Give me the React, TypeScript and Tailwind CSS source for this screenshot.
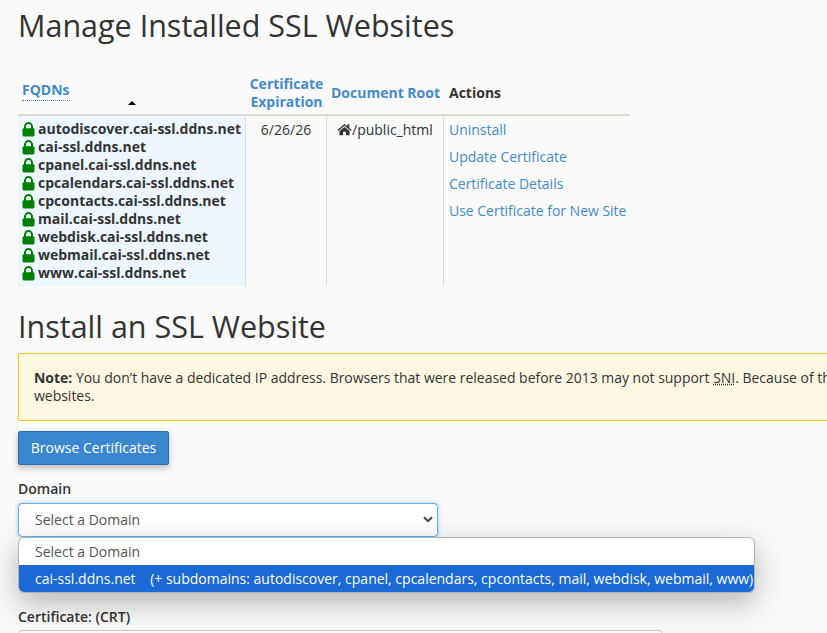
const fqdns = [
  'autodiscover.cai-ssl.ddns.net',
  'cai-ssl.ddns.net',
  'cpanel.cai-ssl.ddns.net',
  'cpcalendars.cai-ssl.ddns.net',
  'cpcontacts.cai-ssl.ddns.net',
  'mail.cai-ssl.ddns.net',
  'webdisk.cai-ssl.ddns.net',
  'webmail.cai-ssl.ddns.net',
  'www.cai-ssl.ddns.net',
]

const actions = ['Uninstall', 'Update Certificate', 'Certificate Details', 'Use Certificate for New Site']

function Lock() {
  return (
    <svg width="13" height="15" viewBox="0 0 13 15" className="shrink-0">
      <path d="M3 7V4.6a3.5 3.5 0 0 1 7 0V7" fill="none" stroke="#008000" strokeWidth="2" />
      <rect x="0.5" y="6.2" width="12" height="8.3" rx="1.4" fill="#008000" />
    </svg>
  )
}

function House() {
  return (
    <svg width="15" height="13" viewBox="0 0 16 13" className="inline-block align-[-1px]">
      <path d="M8 0.6 0.3 7l1 1.1L8 2.6l6.7 5.5 1-1.1-2.6-2.2V1h-2v2.3z" fill="#333333" />
      <path d="M8 3.7 2.6 8.2v4.4h3.8V9h3.2v3.6h3.8V8.2z" fill="#333333" />
    </svg>
  )
}

export default function App() {
  return (
    <div className="relative h-[633px] w-[827px] overflow-hidden bg-[#fafafa] pl-[18px] font-['Open_Sans',sans-serif] text-[14px] text-[#333333]">
      <h1 className="mt-[5px] text-[30.5px] leading-[40px] font-normal">Manage Installed SSL Websites</h1>

      {/* installed sites table */}
      <div className="mt-[30px] w-[612px]">
        <div className="flex h-[41px] border-b-2 border-[#dddcd1] font-bold">
          <div className="relative w-[228px] pl-[4px] pt-[4px]">
            <span className="border-b border-dotted border-[#428bca] pb-[1px] leading-[16px] text-[#428bca]">FQDNs</span>
            <span className="absolute left-[110px] top-[26px] h-0 w-0 border-x-[4px] border-b-[4px] border-x-transparent border-b-black" />
          </div>
          <div className="w-[81px] text-center leading-[18px] text-[#428bca]">
            Certificate
            <br />
            Expiration
          </div>
          <div className="w-[117px] pt-[9px] text-center leading-[18px] text-[#428bca]">Document Root</div>
          <div className="pl-[5px] pt-[9px] leading-[18px]">Actions</div>
        </div>
        <div className="flex h-[170px]">
          <div className="w-[228px] border-r border-[#dddcd1] bg-[#eef7ff] pl-[4px] pt-[4px] font-bold">
            {fqdns.map((name) => (
              <div key={name} className="flex h-[18px] items-center gap-[3px] leading-[18px]">
                <Lock />
                <span>{name}</span>
              </div>
            ))}
          </div>
          <div className="w-[81px] border-r border-[#dddcd1] pt-[5px] text-center leading-[18px]">6/26/26</div>
          <div className="w-[117px] border-r border-[#dddcd1] pt-[5px] pl-[10px] leading-[18px]">
            <House />
            /public_html
          </div>
          <div className="flex-1 pl-[5px] pt-[5px] tracking-[-0.02px]">
            {actions.map((action) => (
              <div key={action} className="h-[27px] leading-[18px] text-[#428bca]">
                {action}
              </div>
            ))}
          </div>
        </div>
      </div>

      <h2 className="mt-[20px] text-[30.5px] leading-[40px] font-normal">Install an SSL Website</h2>

      <div className="mt-[7px] h-[68px] w-[1000px] rounded-[2px] border border-[#f0c419] bg-[#fef8e3] pl-[15px] pt-[15px] leading-[18px] tracking-[-0.02px] whitespace-nowrap">
        <strong className="font-bold">Note:</strong> You don’t have a dedicated IP address. Browsers that were released before 2013 may not support{' '}
        <span className="underline decoration-dotted">SNI</span>. Because of this, you may encounter errors on your
        <br />
        websites.
      </div>

      <button className="mt-[10px] flex h-[34px] w-[151px] items-center justify-center rounded-[2px] border border-[#2e6da4] bg-[#3a87cf] pb-[2px] text-[14px] text-white shadow-[0_3px_6px_rgba(0,0,0,0.25)]">
        Browse Certificates
      </button>

      <div className="mt-[15px] font-semibold leading-[18px]">Domain</div>

      <div className="mt-[5px] flex h-[34px] w-[420px] items-center justify-between rounded-[4px] border border-[#66afe9] bg-white pb-[1px] pl-[16px] pr-[4px] shadow-[0_0_4px_rgba(102,175,233,0.6)]">
        <span className="text-[#555555]">Select a Domain</span>
        <svg width="10" height="7" viewBox="0 0 10 7">
          <path d="M1 1.2 5 5.2 9 1.2" fill="none" stroke="#444444" strokeWidth="2" />
        </svg>
      </div>

      <div className="mt-[71px] font-semibold leading-[18px]">Certificate: (CRT)</div>
      <div className="mt-[4px] h-[60px] w-[645px] rounded-[4px] border border-[#c8c8c8] bg-white" />

      {/* open select list */}
      <div className="absolute left-[18px] top-[537px] w-[737px] overflow-hidden rounded-[6px] border border-[#b4b4b4] bg-white shadow-[0_10px_30px_rgba(0,0,0,0.28)]">
        <div className="flex h-[27px] items-center pl-[16px] text-[#555555]">Select a Domain</div>
        <div className="flex h-[27px] items-center whitespace-pre bg-[#1a69d4] pl-[16px] text-white">
          cai-ssl.ddns.net{'    '}(+ subdomains: autodiscover, cpanel, cpcalendars, cpcontacts, mail, webdisk, webmail, www)
        </div>
      </div>
    </div>
  )
}
